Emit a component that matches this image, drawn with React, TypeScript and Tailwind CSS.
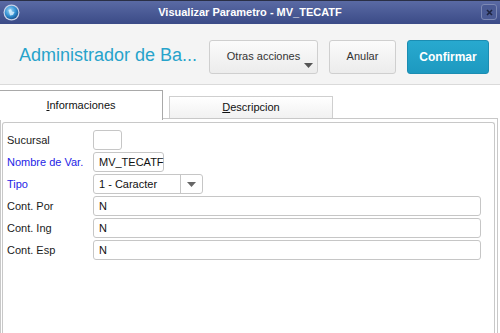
import React from 'react'

const font = { fontFamily: '"Liberation Sans", Arial, sans-serif' }

function TitleBar() {
  return (
    <div className="relative h-[24px] border-t border-[#2a2f45] bg-gradient-to-b from-[#5a6aa4] to-[#3b4b87] flex items-center justify-center">
      {/* app icon */}
      <svg className="absolute left-[3px] top-[3px]" width="17" height="17" viewBox="0 0 17 17">
        <defs>
          <radialGradient id="g1" cx="0.4" cy="0.35" r="0.7">
            <stop offset="0" stopColor="#9fd6f5" />
            <stop offset="0.6" stopColor="#2f8ed0" />
            <stop offset="1" stopColor="#1a4f8c" />
          </radialGradient>
        </defs>
        <circle cx="8.5" cy="8.5" r="8" fill="#c8d2e8" />
        <circle cx="8.5" cy="8.5" r="6.8" fill="url(#g1)" />
        <path d="M5.5 6 L8 5 L9 7.5 L11.5 8 L10 11 L7 11.5 Z" fill="#dff2ff" opacity="0.8" />
      </svg>
      <span className="text-[11px] font-bold text-white">Visualizar Parametro - MV_TECATF</span>
      {/* close */}
      <div className="absolute right-[3px] top-[3px] w-[16px] h-[16px] rounded-[3px] border border-[#7c88b4] bg-[#4a5a94] flex items-center justify-center">
        <svg width="7" height="7" viewBox="0 0 7 7">
          <path d="M1 1 L6 6 M6 1 L1 6" stroke="#1e2440" strokeWidth="1.6" />
        </svg>
      </div>
    </div>
  )
}

function Toolbar() {
  return (
    <div className="h-[61px] bg-[#f4f4f4] border-b border-[#dadada] flex items-center pl-[19px] pr-[11px]">
      <div className="flex-1 text-[18px] text-[#27a3cb] pt-[2px]">Administrador de Ba...</div>
      <div className="flex items-center gap-[11px] pt-[5px]">
        <button className="relative w-[109px] h-[34px] rounded-[3px] border border-[#cfcfcf] bg-gradient-to-b from-[#fbfbfb] to-[#ececec] text-[11px] text-[#333]">
          Otras acciones
          <svg className="absolute right-[4px] bottom-[5px]" width="9" height="5" viewBox="0 0 9 5">
            <path d="M0 0 H9 L4.5 5 Z" fill="#555" />
          </svg>
        </button>
        <button className="w-[67px] h-[34px] rounded-[3px] border border-[#cfcfcf] bg-gradient-to-b from-[#fbfbfb] to-[#ececec] text-[11px] text-[#333]">
          Anular
        </button>
        <button className="w-[82px] h-[34px] rounded-[3px] border border-[#1b8db2] bg-gradient-to-b from-[#28a9cf] to-[#1d99c0] text-[12px] font-bold text-white">
          Confirmar
        </button>
      </div>
    </div>
  )
}

function Tabs() {
  return (
    <div className="flex items-end h-[28px] mt-[5px]">
      <div className="relative z-10 w-[163px] h-[30px] -mb-[2px] bg-white border-t border-r border-[#a9a9a9] flex items-start justify-center pt-[6px] text-[11px] text-[#111]">
        <span><span className="underline">I</span>nformaciones</span>
      </div>
      <div className="ml-[6px] w-[164px] h-[22px] border border-b-0 border-[#cfcfcf] bg-gradient-to-b from-[#ffffff] to-[#f1f1f1] flex items-center justify-center text-[11px] text-[#111]">
        <span><span className="underline">D</span>escripcion</span>
      </div>
    </div>
  )
}

function Row({ label, blue, children }: { label: string; blue?: boolean; children: React.ReactNode }) {
  return (
    <div className="flex items-center h-[20px]">
      <div className={`w-[86px] text-[11px] ${blue ? 'text-[#2424e6]' : 'text-[#1a1a1a]'}`}>{label}</div>
      {children}
    </div>
  )
}

const inputCls = 'h-[20px] rounded-[3px] border border-[#c6c6c6] bg-white text-[11px] text-[#111] pl-[5px] flex items-center'

function Form() {
  return (
    <div className="flex flex-col gap-[2px] pt-[7px] pl-[4px]">
      <Row label="Sucursal">
        <div className={`${inputCls} w-[29px]`} />
      </Row>
      <Row label="Nombre de Var." blue>
        <div className={`${inputCls} w-[71px] whitespace-nowrap`}>MV_TECATF</div>
      </Row>
      <Row label="Tipo" blue>
        <div className={`${inputCls} w-[110px] pr-0`}>
          <span className="flex-1">1 - Caracter</span>
          <div className="w-[22px] h-full border-l border-[#c6c6c6] flex items-center justify-center">
            <svg width="9" height="5" viewBox="0 0 9 5">
              <path d="M0 0 H9 L4.5 5 Z" fill="#666" />
            </svg>
          </div>
        </div>
      </Row>
      <Row label="Cont. Por">
        <div className={`${inputCls} w-[388px]`}>N</div>
      </Row>
      <Row label="Cont. Ing">
        <div className={`${inputCls} w-[388px]`}>N</div>
      </Row>
      <Row label="Cont. Esp">
        <div className={`${inputCls} w-[388px]`}>N</div>
      </Row>
    </div>
  )
}

export default function App() {
  return (
    <div className="w-[500px] h-[333px] bg-white overflow-hidden flex flex-col" style={font}>
      <TitleBar />
      <Toolbar />
      <Tabs />
      {/* panel */}
      <div className="flex-1 mr-[2px] border-t border-l border-r border-[#c8c8c8] pt-[3px] pl-[1px] pr-[2px]">
        <div className="h-full border border-b-0 border-[#c8c8c8] rounded-tl-[3px] rounded-tr-[3px]">
          <Form />
        </div>
      </div>
    </div>
  )
}
